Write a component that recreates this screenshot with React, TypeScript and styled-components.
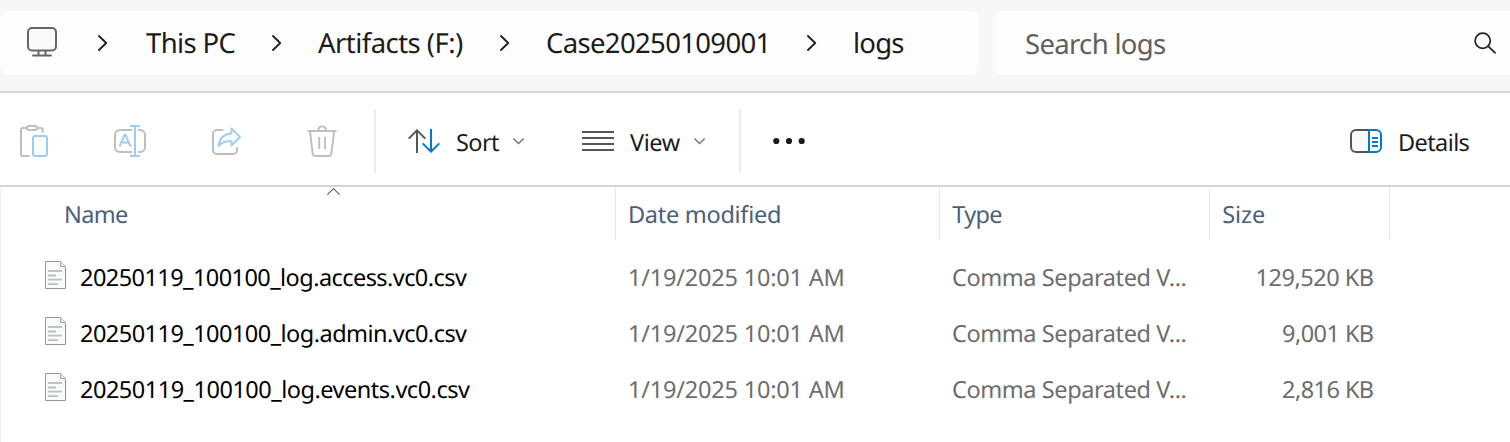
import React from "react";
import styled, { createGlobalStyle } from "styled-components";

const Global = createGlobalStyle`
  * { box-sizing: border-box; }
  body {
    margin: 0;
    background: #fff;
    font-family: "Noto Sans", "Open Sans", sans-serif;
    text-rendering: geometricPrecision;
    overflow: hidden;
  }
  svg { display: block; flex: none; overflow: visible; }
`;

const Window = styled.div`
  display: flex;
  flex-direction: column;
  width: 1510px;
  height: 442px;
`;

const Text = styled.span<{ $track?: number; $width?: number; $drop?: number }>`
  flex: none;
  white-space: pre;
  letter-spacing: ${(p) => p.$track ?? 0}px;
  width: ${(p) => (p.$width ? `${p.$width}px` : "auto")};
  padding-top: ${(p) => p.$drop ?? 0}px;
`;

/* Address bar */
const NavBar = styled.header`
  display: flex;
  gap: 16px;
  height: 93px;
  padding-top: 11px;
  background: #f7f7f7;
  border-bottom: 2px solid #d5d5d5;
`;

const Field = styled.div`
  display: flex;
  align-items: center;
  height: 64px;
  background: #fdfdfd;
  font-size: 27.5px;
  line-height: 40px;
`;

const AddressField = styled(Field)`
  width: 979px;
  padding: 0 0 1px 27px;
  border-radius: 8px;
  color: #1b1b1b;
`;

const SearchField = styled(Field)`
  flex: 1;
  justify-content: space-between;
  padding: 0 13px 0 30px;
  border-radius: 8px 0 0 8px;
  color: #606060;
`;

const Crumb = styled.div<{ $gap: number }>`
  display: flex;
  align-items: center;
  gap: ${(p) => p.$gap}px;
`;

const RootCrumb = styled.div`
  width: 71px;
  padding-bottom: 2px;
`;

/* Command bar */
const CommandBar = styled.div`
  display: flex;
  align-items: center;
  height: 94px;
  padding: 4px 0 0 18px;
  border-bottom: 2px solid #d5d5d5;
  font-size: 23.5px;
  line-height: 34px;
  color: #1b1b1b;
`;

const IconGroup = styled.div`
  display: flex;
  gap: 64px;
  margin-right: 36px;
`;

const Divider = styled.div`
  width: 2px;
  height: 64px;
  background: #ececec;
`;

const Command = styled.div<{ $left: number; $gap?: number }>`
  display: flex;
  align-items: center;
  margin-left: ${(p) => p.$left}px;
  gap: ${(p) => p.$gap ?? 16}px;
`;

const MenuLabel = styled.div`
  display: flex;
  align-items: center;
`;

const DetailsCommand = styled(Command)`
  margin-left: auto;
  margin-right: 39.5px;
`;

/* File list */
const FileList = styled.main`
  flex: 1;
  border-left: 1px solid #f0f0f0;
  font-size: 23.5px;
  line-height: 34px;
`;

const columns = "615px 324px 270px 180px";

const HeaderRow = styled.div`
  display: grid;
  grid-template-columns: ${columns};
  height: 52px;
  margin-bottom: 10px;
  color: #4c607a;
`;

const HeaderCell = styled.div<{ $left: number }>`
  position: relative;
  display: flex;
  align-items: center;
  padding: 2px 0 0 ${(p) => p.$left}px;
  border-right: 1px solid #e5e5e5;
`;

const SortMark = styled.svg`
  position: absolute;
  top: 1px;
  left: 326px;
`;

const Row = styled.div`
  display: grid;
  grid-template-columns: ${columns};
  height: 56px;
  color: #6d6d6d;
`;

const Cell = styled.div<{ $left?: number; $end?: boolean }>`
  display: flex;
  align-items: center;
  justify-content: ${(p) => (p.$end ? "flex-end" : "flex-start")};
  padding: 0 ${(p) => (p.$end ? 16.4 : 0)}px 0 ${(p) => p.$left ?? 0}px;
`;

const NameCell = styled(Cell)`
  gap: 14px;
  color: #000;
  svg { margin-top: -4px; }
`;

const BLUE = "#0078d4";
const SOFT_BLUE = "#9fcdf2";
const SOFT_GRAY = "#bebebe";

const MonitorIcon = () => (
  <svg width="30" height="30" viewBox="0 0 30 30" fill="none" stroke="#666" strokeWidth="2">
    <rect x="1" y="1" width="28" height="22.5" rx="4" fill="#fafafa" />
    <path d="M11.5 23.5v4.5M18.5 23.5v4.5" />
    <path d="M6 28.5h18" strokeLinecap="round" />
  </svg>
);

const ChevronRight = () => (
  <svg width="10" height="16" viewBox="0 0 10 16" fill="none" stroke="#222" strokeWidth="1.9" strokeLinecap="round" strokeLinejoin="round">
    <path d="M1 1l7.2 7L1 15" />
  </svg>
);

const ChevronDown = () => (
  <svg width="11" height="6" viewBox="0 0 11 6" fill="none" stroke="#757575" strokeWidth="1.4">
    <path d="M.4.4l5.1 5L10.6.4" />
  </svg>
);

const SearchIcon = () => (
  <svg width="23" height="22" viewBox="0 0 23 22" fill="none" stroke="#222" strokeWidth="1.7" strokeLinecap="round">
    <circle cx="8.7" cy="8.7" r="7.6" />
    <path d="M14.1 14.2l7 6.6" />
  </svg>
);

const PasteIcon = () => (
  <svg width="32" height="32" viewBox="0 0 32 32" fill="none" stroke={SOFT_GRAY} strokeWidth="2" strokeLinecap="round" strokeLinejoin="round">
    <path d="M11 31H4.5A1.5 1.5 0 0 1 3 29.5V4.5A1.5 1.5 0 0 1 4.5 3H8.5M19.5 3H23A1.7 1.7 0 0 1 24.7 4.7V7" />
    <rect x="8.8" y="1" width="10.2" height="4" rx="2" />
    <rect x="15" y="11" width="14" height="20" rx="2" stroke={SOFT_BLUE} fill="#fbfdfe" />
  </svg>
);

const RenameIcon = () => (
  <svg width="32" height="32" viewBox="0 0 32 32" fill="none" stroke={SOFT_GRAY} strokeWidth="2">
    <path d="M18 5H6A5 5 0 0 0 1 10V22A5 5 0 0 0 6 27H18M24 5H26A5 5 0 0 1 31 10V22A5 5 0 0 1 26 27H24" />
    <g stroke={SOFT_BLUE}>
      <path d="M5.5 21.5L10.7 9.5H11.3L16.5 21.5M7.3 17.5H14.7" />
      <path d="M21 1V31M16 1H25.8M16 31H25.8" />
    </g>
  </svg>
);

const ShareIcon = () => (
  <svg width="32" height="32" viewBox="0 0 32 32" fill="none" stroke={SOFT_GRAY} strokeWidth="2" strokeLinecap="round" strokeLinejoin="round">
    <path d="M12.5 5H7A4 4 0 0 0 3 9V25A4 4 0 0 0 7 29H23A4 4 0 0 0 27 25V23" />
    <path d="M21.5 3.5L30 12L21.5 20.5V16.3C15.5 15.8 11.8 17.5 8.6 21C9.5 13.5 14 8.8 21.5 8.2Z" stroke={SOFT_BLUE} strokeWidth="1.9" fill="#f8fcff" />
  </svg>
);

const TrashIcon = () => (
  <svg width="32" height="32" viewBox="0 0 32 32" fill="none" stroke={SOFT_GRAY} strokeWidth="1.9">
    <path d="M1.4 6H30.7" />
    <path d="M12.3 6C12.3 2.6 13.7 1.4 16.1 1.4S19.9 2.6 19.9 6" />
    <path d="M4 6L6.6 28.2A3 3 0 0 0 9.6 31H22.4A3 3 0 0 0 25.4 28.2L28.2 6" />
    <path d="M13.2 12V24M19 12V24" />
  </svg>
);

const SortIcon = () => (
  <svg width="32" height="24" viewBox="0 0 32 24" fill="none" stroke="#555" strokeWidth="2">
    <path d="M9 24V1.5M.7 9.6L9 1.4L17.3 9.6" />
    <path d="M23 0V22.5M14.7 14.4L23 22.6L31.3 14.4" stroke={BLUE} />
  </svg>
);

const ListIcon = () => (
  <svg width="32" height="20" viewBox="0 0 32 20" stroke="#555" strokeWidth="2">
    <path d="M0 1H32M0 7H32M0 13H32M0 19H32" />
  </svg>
);

const MoreIcon = () => (
  <svg width="32" height="6" viewBox="0 0 32 6" fill="#1b1b1b">
    <circle cx="3.3" cy="3" r="3.1" />
    <circle cx="16" cy="3" r="3.1" />
    <circle cx="28.7" cy="3" r="3.1" />
  </svg>
);

const DetailsIcon = () => (
  <svg width="32" height="24" viewBox="0 0 32 24" fill="none" strokeWidth="2">
    <path d="M18 1H6A5 5 0 0 0 1 6V18A5 5 0 0 0 6 23H18" stroke="#555" fill="#fafafa" />
    <path d="M19 1H26A5 5 0 0 1 31 6V18A5 5 0 0 1 26 23H19Z" stroke={BLUE} />
    <path d="M22 9H28M22 13H28M22 17H28" stroke={BLUE} />
  </svg>
);

const FileIcon = () => (
  <svg width="21" height="28" viewBox="0 0 21 28" fill="none">
    <path d="M.5.5H15.5L20.5 5.5V27.5H.5Z" fill="#f9fafa" stroke="#949494" />
    <path d="M15.5.5V5.5H20.5" fill="#e8e8e8" stroke="#a5a5a5" />
    <path d="M3 10H17M3 14.5H11M3 18.7H17M3 23.2H13" stroke="#bfc1c1" strokeWidth="1.8" />
  </svg>
);

const crumbs = [
  { label: "This PC", track: -0.66, width: 126, gap: 38 },
  { label: "Artifacts (F:)", track: -0.55, width: 182, gap: 36 },
  { label: "Case20250109001", track: -0.66, width: 261, gap: 36 },
  { label: "logs", track: -0.8, width: 60, gap: 36 },
];

const files = [
  { name: "20250119_100100_log.access.vc0.csv", track: -0.56, size: "129,520 KB", sizeTrack: -0.48 },
  { name: "20250119_100100_log.admin.vc0.csv", track: -0.53, size: "9,001 KB", sizeTrack: -0.55 },
  { name: "20250119_100100_log.events.vc0.csv", track: -0.49, size: "2,816 KB", sizeTrack: -0.55 },
];

export default function App() {
  return (
    <Window>
      <Global />
      <NavBar>
        <AddressField>
          <RootCrumb><MonitorIcon /></RootCrumb>
          {crumbs.map((c) => (
            <Crumb key={c.label} $gap={c.gap}>
              <ChevronRight />
              <Text $track={c.track} $width={c.width} $drop={2}>{c.label}</Text>
            </Crumb>
          ))}
        </AddressField>
        <SearchField>
          <Text $track={-0.68} $drop={3}>Search logs</Text>
          <SearchIcon />
        </SearchField>
      </NavBar>

      <CommandBar>
        <IconGroup>
          <PasteIcon />
          <RenameIcon />
          <ShareIcon />
          <TrashIcon />
        </IconGroup>
        <Divider />
        <Command $left={32}>
          <SortIcon />
          <MenuLabel>
            <Text $track={-0.6} $width={56.5} $drop={2}>Sort</Text>
            <ChevronDown />
          </MenuLabel>
        </Command>
        <Command $left={58.5}>
          <ListIcon />
          <MenuLabel>
            <Text $track={-0.4} $width={63.5} $drop={2}>View</Text>
            <ChevronDown />
          </MenuLabel>
        </Command>
        <Command $left={34.5} $gap={32}>
          <Divider />
          <MoreIcon />
        </Command>
        <DetailsCommand $left={0}>
          <DetailsIcon />
          <Text $track={-0.6} $width={72.5} $drop={2}>Details</Text>
        </DetailsCommand>
      </CommandBar>

      <FileList>
        <HeaderRow>
          <HeaderCell $left={63}>
            <SortMark width="13" height="7" viewBox="0 0 13 7" fill="none" stroke="#555" strokeWidth="1.1">
              <path d="M.4 6.7L6.5.7L12.6 6.7" />
            </SortMark>
            <Text $track={-0.67}>Name</Text>
          </HeaderCell>
          <HeaderCell $left={12}><Text $track={-0.28}>Date modified</Text></HeaderCell>
          <HeaderCell $left={12.3}><Text $track={-0.7}>Type</Text></HeaderCell>
          <HeaderCell $left={12.3}><Text $track={-0.13}>Size</Text></HeaderCell>
        </HeaderRow>
        {files.map((f) => (
          <Row key={f.name}>
            <NameCell $left={44}>
              <FileIcon />
              <Text $track={f.track}>{f.name}</Text>
            </NameCell>
            <Cell $left={12}><Text $track={-0.2}>1/19/2025 10:01 AM</Text></Cell>
            <Cell $left={12}><Text $track={-0.41}>Comma Separated V...</Text></Cell>
            <Cell $end><Text $track={f.sizeTrack}>{f.size}</Text></Cell>
          </Row>
        ))}
      </FileList>
    </Window>
  );
}
